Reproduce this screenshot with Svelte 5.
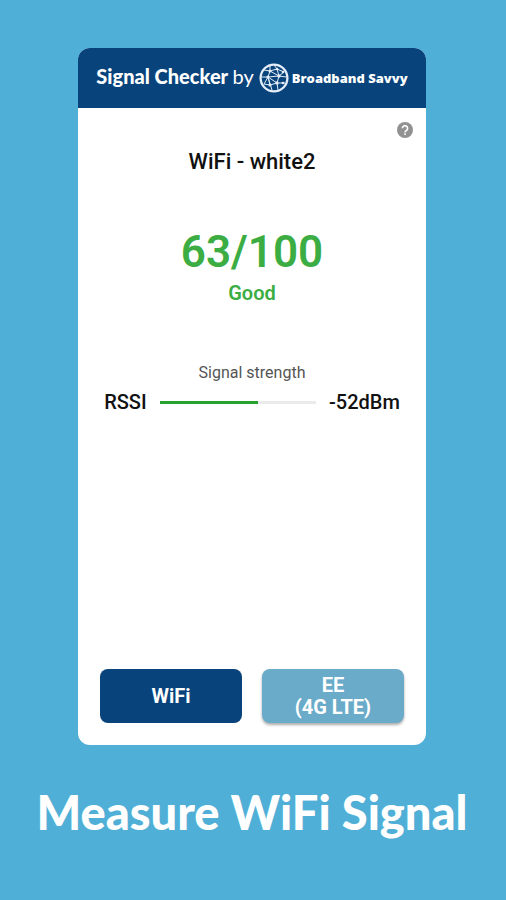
<script>
  const network = 'white2';
  const score = 63;
  const rssi = -52;
</script>

<main>
  <section class="card">
    <header>
      <h1>Signal Checker <span>by</span></h1>
      <div class="brand">
        <svg width="30" height="30" viewBox="0 0 30 30" fill="none" stroke="#e4edf8" aria-hidden="true">
          <circle cx="15" cy="15" r="13.4" stroke-width="2.3" />
          <g stroke-width="1">
            <path d="M5 7L11 8L18 6L25 9M11 3L11 8L9 14L13 27M18 6L20 13L27 14M3 14L9 14L20 13M9 14L5 21L11 22L18 20L26 20M20 13L18 20L19 27M11 8L20 13M11 22L9 14M18 20L9 14M25 9L20 13M18 6L15 2" />
          </g>
          <g fill="#e4edf8" stroke="none">
            <circle cx="11" cy="8" r="1.5" /><circle cx="18" cy="6" r="1.3" />
            <circle cx="24" cy="9" r="1.3" /><circle cx="9" cy="14" r="1.6" />
            <circle cx="20" cy="13" r="1.7" /><circle cx="11" cy="22" r="1.5" />
            <circle cx="18" cy="20" r="1.7" /><circle cx="24" cy="20" r="1.3" />
          </g>
        </svg>
        <strong>Broadband Savvy</strong>
      </div>
    </header>

    <div class="body">
      <button class="help" aria-label="Help">
        <svg width="16" height="16" viewBox="0 0 16 16" aria-hidden="true">
          <circle cx="8" cy="8" r="8" fill="#919191" />
          <path d="M5.4 6.3a2.6 2.6 0 1 1 4.2 2C8.700 9 8 9.300 8 10.400" fill="none" stroke="#fff" stroke-width="1.600" />
          <rect x="7.200" y="11.400" width="1.600" height="1.600" fill="#fff" />
        </svg>
      </button>
      <h2>WiFi - {network}</h2>
      <p class="score">{score}/100</p>
      <p class="rating">Good</p>
      <p class="label" id="strength">Signal strength</p>
      <div class="meter">
        <span>RSSI</span>
        <div class="track" role="meter" aria-labelledby="strength" aria-valuemin="0" aria-valuemax="100" aria-valuenow={score}>
          <div class="fill" style="width: {score}%"></div>
        </div>
        <span>{rssi}dBm</span>
      </div>
    </div>

    <nav>
      <button class="tab active">WiFi</button>
      <button class="tab">EE<br />(4G LTE)</button>
    </nav>
  </section>
  <p class="caption">Measure WiFi Signal</p>
</main>

<style>
  :global(body) {
    margin: 0;
    background: #50afd6;
  }
  main {
    box-sizing: border-box;
    min-height: 100vh;
    padding: 48px 2px 56px 0;
    display: flex;
    flex-direction: column;
    align-items: center;
    background: #50afd6;
    font-family: Roboto, sans-serif;
    color: #111;
  }
  h1, h2, p {
    margin: 0;
  }
  .card {
    width: 69%;
    flex: 1;
    display: flex;
    flex-direction: column;
    background: #fff;
    border-radius: 12px;
    overflow: hidden;
  }
  header {
    display: flex;
    align-items: center;
    justify-content: center;
    gap: 5px;
    height: 60px;
    background: #08437b;
    color: #fff;
    white-space: nowrap;
  }
  h1 {
    font: 900 20px/24px Lato, sans-serif;
    padding-bottom: 4px;
  }
  h1 span {
    font-weight: 400;
  }
  .brand {
    display: flex;
    align-items: center;
    gap: 3px;
  }
  .brand svg {
    display: block;
  }
  .brand strong {
    font: 800 13px/16px "Open Sans", sans-serif;
  }
  .body {
    flex: 1;
    display: flex;
    flex-direction: column;
    text-align: center;
    padding: 14px 0 0;
  }
  .help {
    align-self: flex-end;
    margin-right: 13px;
    padding: 0;
    border: 0;
    background: none;
    height: 16px;
  }
  .help svg {
    display: block;
  }
  h2 {
    margin-top: 12px;
    font: 500 22px/24px Roboto, sans-serif;
  }
  .score {
    margin-top: 52px;
    font-size: 44px;
    line-height: 52px;
    font-weight: 600;
    color: #3bad43;
  }
  .rating {
    margin-top: 3px;
    font-size: 20px;
    line-height: 24px;
    font-weight: 600;
    color: #3bad43;
  }
  .label {
    margin-top: 58px;
    font-size: 16px;
    line-height: 20px;
    color: #555;
  }
  .meter {
    display: flex;
    align-items: center;
    gap: 13px;
    margin: 7px 26px 0;
    font-size: 20px;
    line-height: 24px;
    font-weight: 500;
  }
  .track {
    flex: 1;
    height: 3px;
    background: #ebebeb;
  }
  .fill {
    height: 3px;
    background: #27a22e;
  }
  nav {
    display: flex;
    gap: 20px;
    padding: 0 22px 22px;
  }
  .tab {
    flex: 1;
    height: 54px;
    padding: 0;
    border: 0;
    border-radius: 8px;
    background: #6aabc9;
    box-shadow: 0 2px 3px #0005;
    color: #fff;
    font: 700 20px/22px Roboto, sans-serif;
  }
  .tab.active {
    background: #08437b;
    box-shadow: none;
  }
  .caption {
    margin-top: 35px;
    font: 900 47px/64px Lato, sans-serif;
    color: #fff;
  }
</style>
